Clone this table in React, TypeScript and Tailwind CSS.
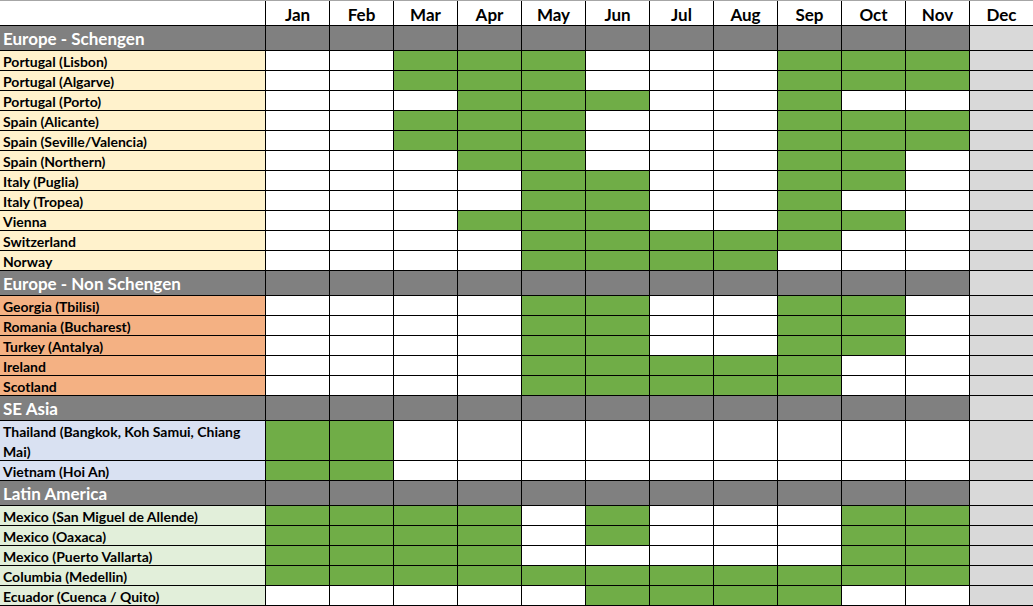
import React from "react";

const MONTHS = ["Jan", "Feb", "Mar", "Apr", "May", "Jun", "Jul", "Aug", "Sep", "Oct", "Nov", "Dec"];

type Row = { label: React.ReactNode; on: number[]; tall?: boolean };
type Section = { title: string; bg: string; rows: Row[] };

const SECTIONS: Section[] = [
  {
    title: "Europe - Schengen",
    bg: "bg-[#FFF2CC]",
    rows: [
      { label: "Portugal (Lisbon)", on: [2, 3, 4, 8, 9, 10] },
      { label: "Portugal (Algarve)", on: [2, 3, 4, 8, 9, 10] },
      { label: "Portugal (Porto)", on: [3, 4, 5, 8] },
      { label: "Spain (Alicante)", on: [2, 3, 4, 8, 9, 10] },
      { label: "Spain (Seville/Valencia)", on: [2, 3, 4, 8, 9, 10] },
      { label: "Spain (Northern)", on: [3, 4, 8, 9] },
      { label: "Italy (Puglia)", on: [4, 5, 8, 9] },
      { label: "Italy (Tropea)", on: [4, 5, 8] },
      { label: "Vienna", on: [3, 4, 5, 8, 9] },
      { label: "Switzerland", on: [4, 5, 6, 7, 8] },
      { label: "Norway", on: [4, 5, 6, 7] },
    ],
  },
  {
    title: "Europe - Non Schengen",
    bg: "bg-[#F4B183]",
    rows: [
      { label: "Georgia (Tbilisi)", on: [4, 5, 8, 9] },
      { label: "Romania (Bucharest)", on: [4, 5, 8, 9] },
      { label: "Turkey (Antalya)", on: [4, 5, 8, 9] },
      { label: "Ireland", on: [4, 5, 6, 7, 8] },
      { label: "Scotland", on: [4, 5, 6, 7, 8] },
    ],
  },
  {
    title: "SE Asia",
    bg: "bg-[#D9E1F2]",
    rows: [
      {
        label: (
          <>
            <span className="block h-[20px] leading-[21px] whitespace-nowrap">Thailand (Bangkok, Koh Samui, Chiang</span>
            <span className="block h-[19px] leading-[21px] whitespace-nowrap">Mai)</span>
          </>
        ),
        on: [0, 1],
        tall: true,
      },
      { label: "Vietnam (Hoi An)", on: [0, 1] },
    ],
  },
  {
    title: "Latin America",
    bg: "bg-[#E2EFDA]",
    rows: [
      { label: "Mexico (San Miguel de Allende)", on: [0, 1, 2, 3, 5, 9, 10] },
      { label: "Mexico (Oaxaca)", on: [0, 1, 2, 3, 5, 9, 10] },
      { label: "Mexico (Puerto Vallarta)", on: [0, 1, 2, 3, 9, 10] },
      { label: "Columbia (Medellin)", on: [0, 1, 2, 3, 4, 5, 6, 7, 8, 9, 10] },
      { label: "Ecuador (Cuenca / Quito)", on: [5, 6, 7, 8] },
    ],
  },
];

const GRID = "grid grid-cols-[266px_repeat(11,64px)_63px]";

export default function App() {
  return (
    <div
      className="w-[1033px] h-[606px] overflow-hidden bg-white text-black border-t border-[#a6a6a6]"
      style={{ fontFamily: "Lato, 'Open Sans', sans-serif" }}
    >
      {/* Header */}
      <div className={`${GRID} h-[25px]`}>
        <div className="border-r border-b border-black" />
        {MONTHS.map((m, i) => (
          <div
            key={m}
            className={`border-b border-black flex items-center justify-center pt-[2px] text-[17px] font-bold leading-none ${
              i < 11 ? "border-r" : ""
            }`}
          >
            {m}
          </div>
        ))}
      </div>
      {SECTIONS.map((s) => (
        <React.Fragment key={s.title}>
          <div className={`${GRID} h-[25px]`}>
            <div className="border-r border-b border-black bg-[#808080] text-white text-[17px] font-bold flex items-center pl-[3px] pt-[1px] leading-none whitespace-nowrap">
              {s.title}
            </div>
            {MONTHS.map((m, i) => (
              <div
                key={m}
                className={
                  i < 11
                    ? "border-r border-b border-black bg-[#808080]"
                    : "border-b border-black bg-[#D9D9D9]"
                }
              />
            ))}
          </div>
          {s.rows.map((r, ri) => (
            <div key={ri} className={`${GRID} ${r.tall ? "h-[40px]" : "h-[20px]"}`}>
              <div
                className={`border-r border-b border-black ${s.bg} text-[14px] font-bold pl-[3px] ${
                  r.tall ? "" : "flex items-center pt-[2px] whitespace-nowrap leading-none"
                }`}
              >
                {r.label}
              </div>
              {MONTHS.map((m, i) => (
                <div
                  key={m}
                  className={
                    i === 11
                      ? "border-b border-black bg-[#D9D9D9]"
                      : `border-r border-b border-black ${r.on.includes(i) ? "bg-[#70AD47]" : "bg-white"}`
                  }
                />
              ))}
            </div>
          ))}
        </React.Fragment>
      ))}
    </div>
  );
}
